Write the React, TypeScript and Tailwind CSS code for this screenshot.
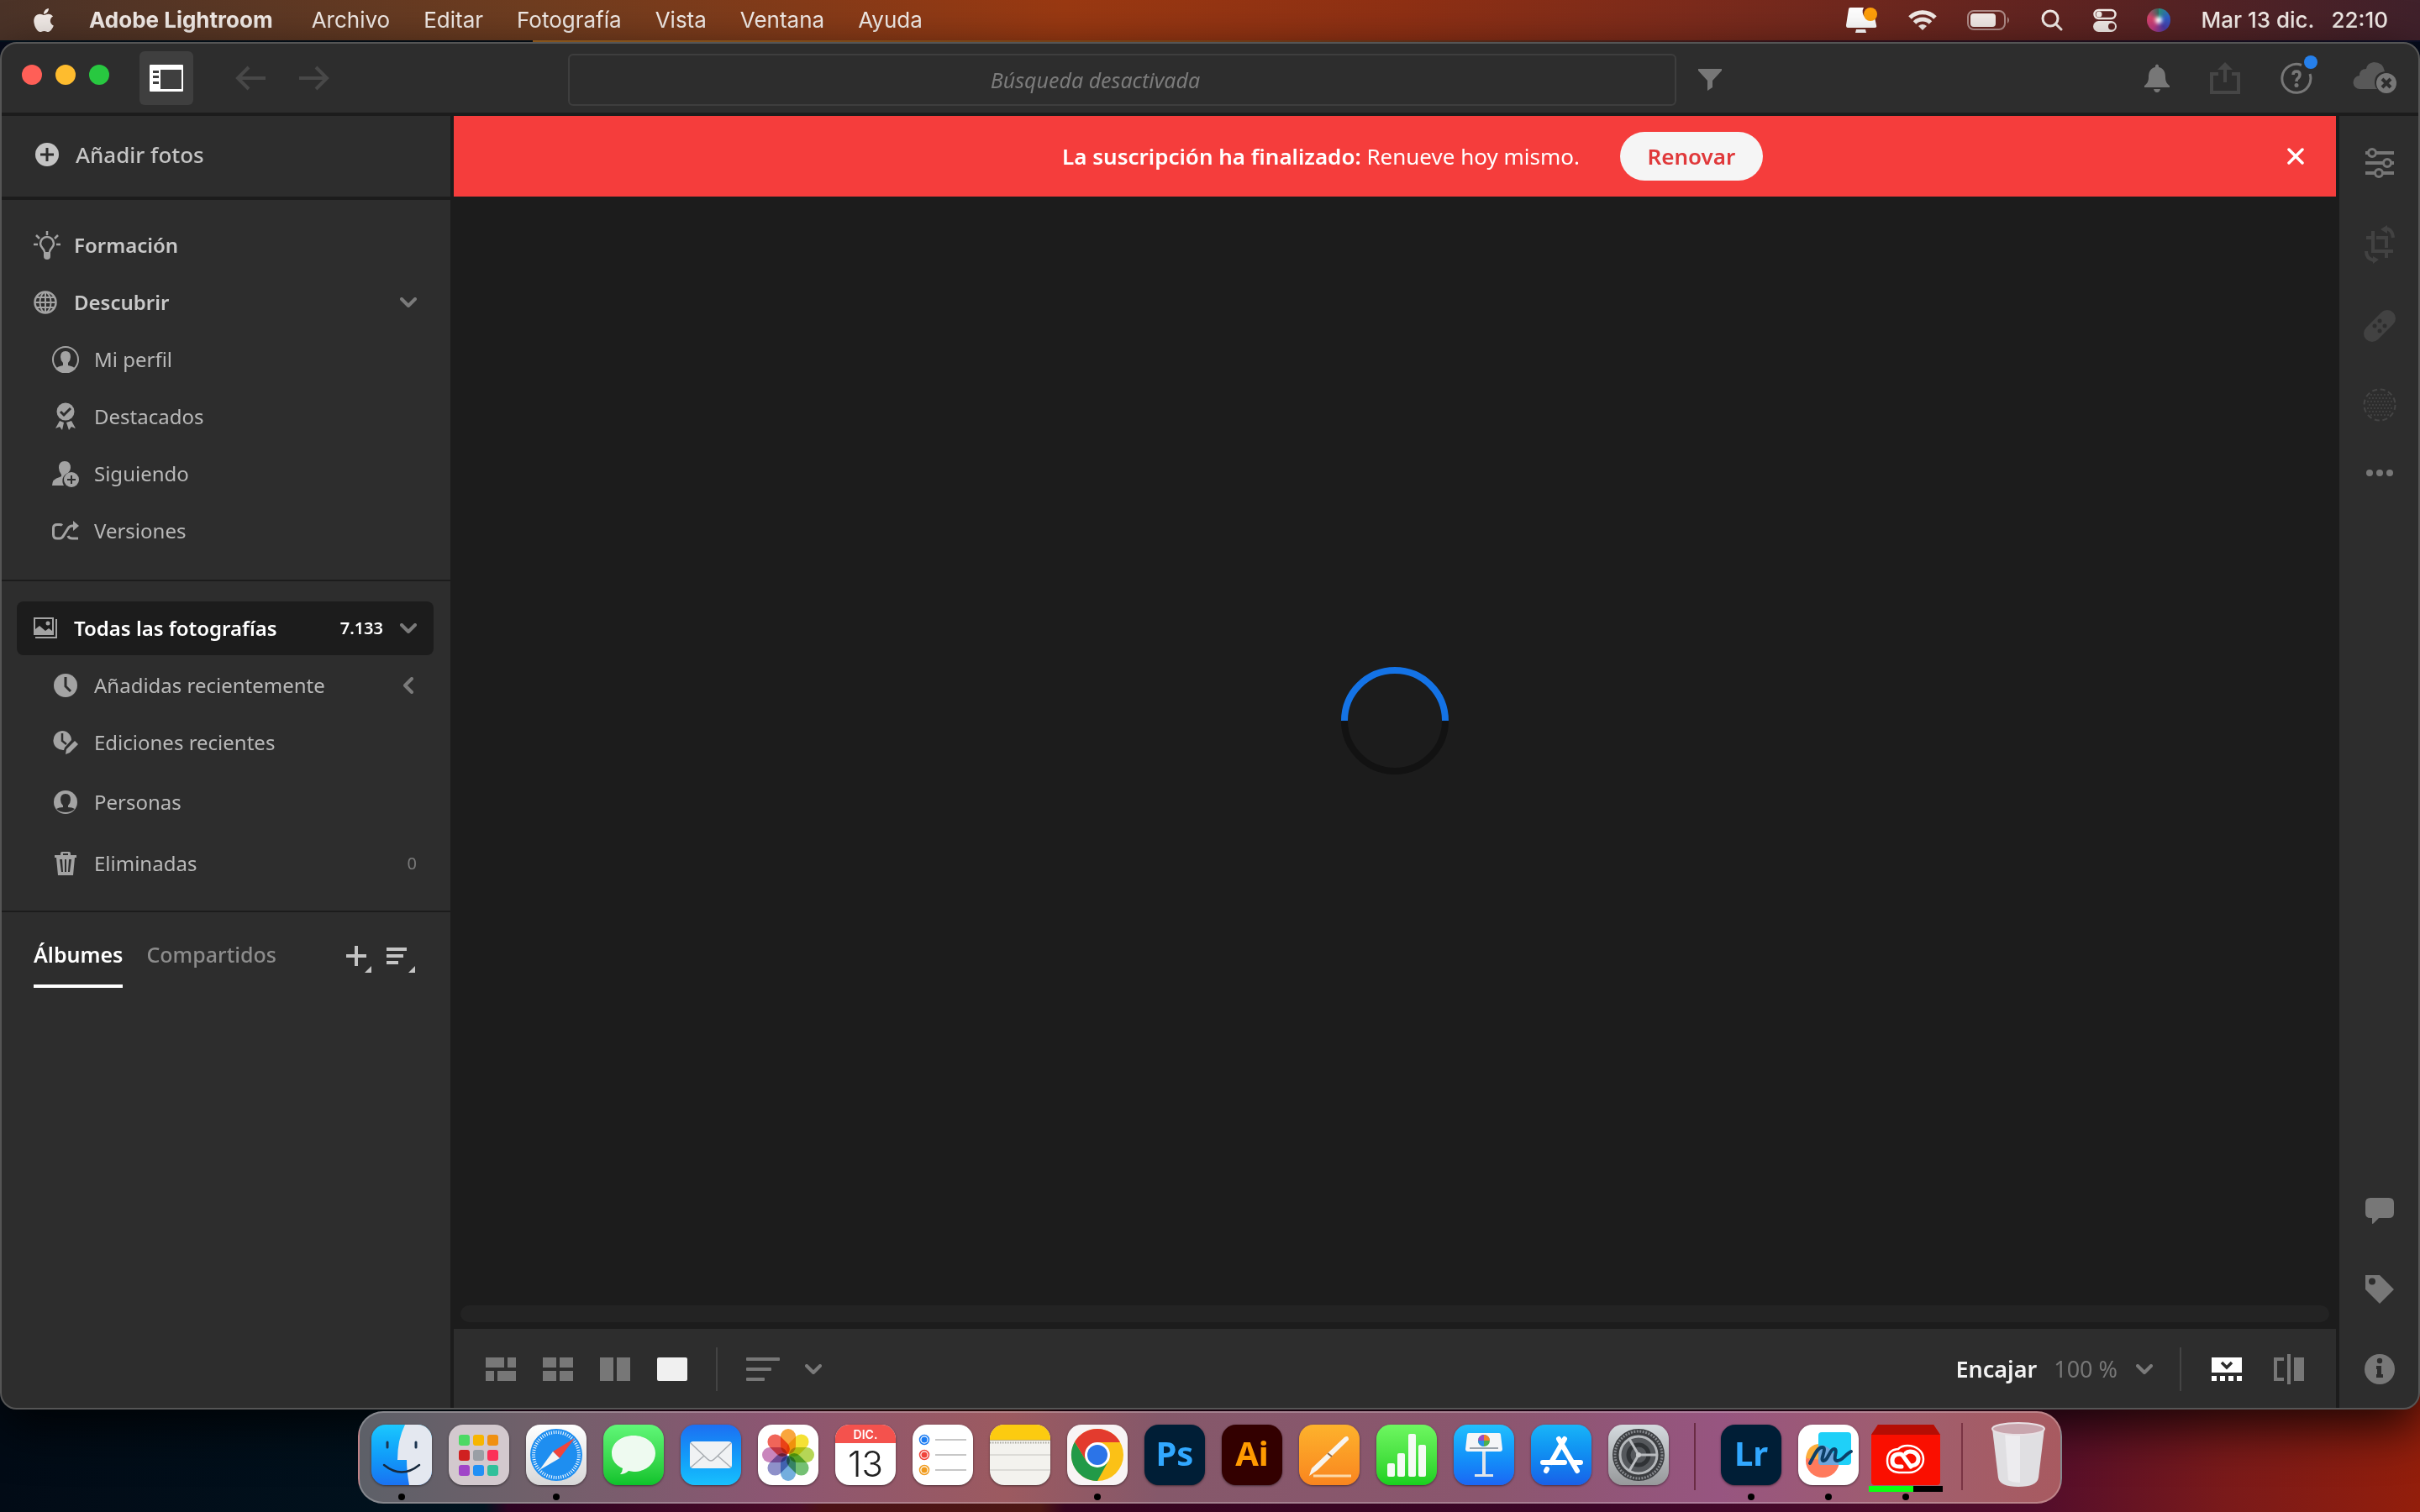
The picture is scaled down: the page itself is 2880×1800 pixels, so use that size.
import type { ReactNode } from 'react';
import { FaApple } from 'react-icons/fa';

type Kids = { children: ReactNode };

function Icon({ box, className, children }: Kids & { box: string; className: string }) {
  return (
    <svg viewBox={box} className={className} fill="currentColor" aria-hidden="true">
      {children}
    </svg>
  );
}

const Chevron = ({ className = 'w-5 h-3 text-[#7a7a7a]' }: { className?: string }) => (
  <svg viewBox="0 0 20 12" className={className} fill="none" stroke="currentColor" strokeWidth="4" strokeLinecap="round" strokeLinejoin="round" aria-hidden="true">
    <path d="M2 2l8 8 8-8" />
  </svg>
);

/* ---------- macOS menu bar ---------- */

const MENUS = ['Archivo', 'Editar', 'Fotografía', 'Vista', 'Ventana', 'Ayuda'];

function MenuBar() {
  return (
    <header className="flex h-12 shrink-0 items-center justify-between bg-linear-[90deg,#4b3328_0%,#6f3d20_22%,#9a3912_44%,#8f3014_58%,#7c2b1c_70%,#602421_85%,#40212b_100%] pr-[38px] pl-[38px] text-[26px] leading-8 text-[#f3ece8]">
      <nav className="flex items-center gap-10">
        <button aria-label="Apple">
          <FaApple className="h-8 w-7" />
        </button>
        <button className="mr-1.5 font-bold">Adobe Lightroom</button>
        {MENUS.map((m) => (
          <button key={m}>{m}</button>
        ))}
      </nav>
      <div className="flex items-center gap-9">
        <Icon box="0 0 38 32" className="h-8 w-[38px] text-white">
          <path d="M3 3q0-2 2-2h16a9 9 0 0 0 13 12l2 9q1 3-2 3H2q-2 0-2-3zM12 27h11l1 4H11z" />
          <circle cx="29" cy="9" r="8" fill="#ff9f0a" />
        </Icon>
        <svg viewBox="0 0 34 26" className="h-[26px] w-[34px]" fill="none" stroke="currentColor" strokeWidth="5" aria-hidden="true">
          <path d="M2 10a21 21 0 0 1 30 0M7.500 16a13.500 13.500 0 0 1 19 0" />
          <path d="M17 25l-5-5q5-4 10 0z" fill="currentColor" stroke="none" />
        </svg>
        <svg viewBox="0 0 52 26" className="h-[26px] w-[52px]" aria-hidden="true">
          <rect x="1" y="2" width="44" height="22" rx="7" fill="none" stroke="#b08c88" strokeWidth="2" />
          <rect x="4" y="5" width="30" height="16" rx="4" fill="currentColor" />
          <path d="M48 9q4 4 0 8z" fill="#b08c88" />
        </svg>
        <svg viewBox="0 0 26 26" className="size-[26px]" fill="none" stroke="currentColor" strokeWidth="3" strokeLinecap="round" aria-hidden="true">
          <circle cx="11" cy="11" r="9" />
          <path d="M17.500 17.500l6.500 6.500" />
        </svg>
        <svg viewBox="0 0 28 28" className="size-7" fill="currentColor" aria-hidden="true">
          <rect x="1.500" y="2" width="25" height="10" rx="5" fill="none" stroke="currentColor" strokeWidth="2.500" />
          <circle cx="7" cy="7" r="3.500" />
          <rect y="15" width="28" height="13" rx="6.500" />
          <circle cx="22" cy="21.500" r="4" fill="#5c2422" />
        </svg>
        <span className="flex size-7 items-center justify-center rounded-full bg-[conic-gradient(#2b8f7a,#2f5fc8,#4a3aa8,#c03a80,#d8436a,#356a60)]">
          <span className="size-2 rounded-full bg-white blur-[2px]" />
        </span>
        <time className="flex gap-5 font-medium">
          <span>Mar 13 dic.</span>
          <span>22:10</span>
        </time>
      </div>
    </header>
  );
}

/* ---------- Title bar ---------- */

function TitleBar() {
  return (
    <div className="flex h-[86px] shrink-0 items-center border-b-4 border-[#1c1c1c]">
      <div className="flex w-[674px] shrink-0 items-center pl-6">
        <div className="flex gap-4 pb-2">
          <button aria-label="Cerrar" className="size-6 rounded-full bg-[#ff5f57]" />
          <button aria-label="Minimizar" className="size-6 rounded-full bg-[#febc2e]" />
          <button aria-label="Ampliar" className="size-6 rounded-full bg-[#28c840]" />
        </div>
        <button aria-label="Panel izquierdo" className="ml-9 flex size-16 items-center justify-center rounded-md bg-[#3f3f3f]">
          <Icon box="0 0 40 32" className="h-8 w-10 text-white">
            <path fillRule="evenodd" d="M1 0h38q1 0 1 1v30q0 1-1 1H1q-1 0-1-1V1q0-1 1-1zm12 6v23h25V6z" />
            <path d="M4 7h7v3H4zm0 6h7v3H4zm0 7h7v3H4z" fill="#3f3f3f" />
          </Icon>
        </button>
        <div className="ml-[50px] flex gap-10 text-[#484848]">
          <button aria-label="Atrás">
            <svg viewBox="0 0 36 30" className="h-[30px] w-9" fill="none" stroke="currentColor" strokeWidth="4" aria-hidden="true">
              <path d="M36 15H3M16 2L3 15l13 13" />
            </svg>
          </button>
          <button aria-label="Adelante">
            <svg viewBox="0 0 36 30" className="h-[30px] w-9" fill="none" stroke="currentColor" strokeWidth="4" aria-hidden="true">
              <path d="M0 15h33M20 2l13 13-13 13" />
            </svg>
          </button>
        </div>
      </div>
      <input
        disabled
        aria-label="Buscar"
        placeholder="Búsqueda desactivada"
        className="mt-1 h-[62px] min-w-0 flex-1 rounded-md border-2 border-[#3e3e3e] pr-16 text-center font-['Noto_Sans',sans-serif] text-[25px] italic placeholder:text-[#7b7b7b]"
      />
      <div className="flex w-[883px] shrink-0 items-center justify-between pr-[26px] pl-[26px] text-[#777]">
        <button aria-label="Filtrar" className="pt-1">
          <Icon box="0 0 28 26" className="h-[26px] w-7">
            <path d="M0 0h28v2L17 14v8l-6 4V14L0 2z" />
          </Icon>
        </button>
        <div className="flex items-center gap-12">
          <button aria-label="Notificaciones">
            <Icon box="0 0 30 34" className="h-[34px] w-[30px]">
              <path d="M13 2q2-3 4 0v2c6 1 8 6 8 12 0 5 2 8 5 10v2H0v-2c3-2 5-5 5-10 0-6 2-11 8-12zM11 30h8q-1 4-4 4t-4-4z" />
            </Icon>
          </button>
          <button aria-label="Compartir" className="text-[#464646]">
            <svg viewBox="0 0 36 38" className="h-[38px] w-9" fill="none" stroke="currentColor" strokeWidth="4" aria-hidden="true">
              <path d="M10 14H2v22h32V14h-8M18 24V6" />
              <path d="M9 9l9-9 9 9z" fill="currentColor" stroke="none" />
            </svg>
          </button>
          <button aria-label="Ayuda" className="relative">
            <svg viewBox="0 0 38 38" className="size-[38px]" fill="none" stroke="currentColor" strokeWidth="3" aria-hidden="true">
              <path d="M25 3.500A17 17 0 1 0 35 14" />
              <path d="M15 15q0-4 4-4t4 4q0 2-2 4-2 1-2 4" strokeWidth="3.500" />
              <circle cx="19" cy="27.500" r="2.500" fill="currentColor" stroke="none" />
            </svg>
            <span className="absolute -top-2 -right-1.5 size-4 rounded-full bg-[#2680eb]" />
          </button>
          <button aria-label="Estado de la nube">
            <Icon box="0 0 52 38" className="h-[38px] w-[52px]">
              <path d="M9 32a8 8 0 0 1-1-16Q8 8 16 8q1-7 9-8 11 0 13 11-12 2-12 13 0 5 3 8z" fill="#585858" />
              <circle cx="40" cy="25" r="12" />
              <path d="M35 20l10 10m0-10L35 30" stroke="#2d2d2d" strokeWidth="4" />
            </Icon>
          </button>
        </div>
      </div>
    </div>
  );
}

/* ---------- Sidebar ---------- */

const icons = {
  bulb: (
    <svg viewBox="0 0 32 34" className="h-[34px] w-8" fill="none" stroke="currentColor" strokeWidth="2.500" aria-hidden="true">
      <path d="M16 0v5M0 16h5M27 16h5M3 5l4 4M29 5l-4 4M13 25c0-4-5-5-5-10a8 8 0 0 1 16 0c0 5-5 6-5 10" />
      <path d="M12 25h8v5q0 4-4 4t-4-4z" fill="currentColor" stroke="none" />
    </svg>
  ),
  globe: (
    <svg viewBox="0 0 28 28" className="size-7" fill="none" stroke="currentColor" strokeWidth="2" aria-hidden="true">
      <circle cx="14" cy="14" r="12.500" strokeWidth="2.500" />
      <path d="M14 2v24M2 14h24M4 8h20M4 20h20" />
      <ellipse cx="14" cy="14" rx="6.500" ry="12" />
    </svg>
  ),
  profile: (
    <Icon box="0 0 32 32" className="size-8">
      <circle cx="16" cy="16" r="15" fill="none" stroke="currentColor" strokeWidth="2" />
      <path d="M16 6q6 0 6 7 0 4-3 7v3q6 1 9 4a16 16 0 0 1-24 0q3-3 9-4v-3q-3-3-3-7 0-7 6-7z" />
    </Icon>
  ),
  award: (
    <Icon box="0 0 24 34" className="h-[34px] w-6">
      <circle cx="12" cy="11" r="10.500" />
      <path d="M6 11l4 4 8-8" fill="none" stroke="#2d2d2d" strokeWidth="3" />
      <path d="M5 22l5 2-2 9-3-4-5 2zM19 22l-6 2 3 9 3-4 5 2z" />
    </Icon>
  ),
  follow: (
    <Icon box="0 0 32 32" className="size-8">
      <path d="M15 1q7 0 7 8 0 3-3 6a10 10 0 0 0-5 15H0q0-8 9-10l2-1v-2q-3-4-3-8 0-8 7-8z" />
      <circle cx="23" cy="23" r="9" />
      <path d="M23 18v10M18 23h10" stroke="#2d2d2d" strokeWidth="2" />
    </Icon>
  ),
  versions: (
    <svg viewBox="0 0 32 24" className="h-6 w-8" fill="none" stroke="currentColor" strokeWidth="3" aria-hidden="true">
      <path d="M12 5.500q-1-1-3-1H6q-4.500 0-4.500 4v8q0 4.500 4.500 4.500h3q3 0 5-4l5-8q2-3 5-3h2M19 18q1 3 5 3h7" />
      <path d="M25 0l7 6-7 6z" fill="currentColor" stroke="none" />
    </svg>
  ),
  clock: (
    <Icon box="0 0 28 28" className="size-7">
      <circle cx="14" cy="14" r="14" />
      <path d="M14 4v11l6 6" fill="none" stroke="#2d2d2d" strokeWidth="3" />
    </Icon>
  ),
  edits: (
    <Icon box="0 0 30 30" className="size-[30px]">
      <path d="M11 1a11 11 0 0 1 11 11l-8 9-1 3A11 11 0 1 1 11 1z" />
      <path d="M11 4v9l5 4" fill="none" stroke="#2d2d2d" strokeWidth="2.500" />
      <path d="M15 29l1-6 10-10 4 4-10 10z" />
    </Icon>
  ),
  person: (
    <Icon box="0 0 28 28" className="size-7">
      <circle cx="14" cy="14" r="14" />
      <path d="M14 4q6 0 6 7 0 4-3 7v2q5 0 8 2-4 4-11 4T3 22q3-2 8-2v-2q-3-3-3-7 0-7 6-7z" fill="#2d2d2d" />
    </Icon>
  ),
  trash: (
    <Icon box="0 0 26 28" className="h-7 w-[26px]">
      <path fillRule="evenodd" d="M7 4V2q0-2 2-2h8q2 0 2 2v2h7v3h-2l-2 21H4L2 7H0V4zm3 0h6V2h-6zM6 9l2 15h2L9 9zm6 0v15h2V9zm5 0l-1 15h2l2-15z" />
    </Icon>
  ),
  photos: (
    <Icon box="0 0 28 26" className="h-[26px] w-7">
      <path fillRule="evenodd" d="M0 0h24v21H0zm2 2v12l5-4 7 6 4-3 4 3V2z" />
      <circle cx="17" cy="7" r="2.500" />
      <path d="M26 2h2v23H2v-2h24z" />
    </Icon>
  ),
};

function Row({ icon, label, right, sub, tall }: { icon: ReactNode; label: string; right?: ReactNode; sub?: boolean; tall?: boolean }) {
  return (
    <li>
      <button className={`flex w-full items-center pr-5 text-left ${tall ? 'h-[73px]' : 'h-[68px]'} ${sub ? 'pl-[42px] text-[#b9b9b9]' : 'pl-5 font-semibold text-[#c8c8c8]'}`}>
        <span className={`flex w-8 shrink-0 text-[#a3a3a3] ${sub ? 'justify-center' : ''}`}>{icon}</span>
        <span className={`flex-1 ${sub ? 'ml-[18px]' : 'ml-4'}`}>{label}</span>
        {right}
      </button>
    </li>
  );
}

function Sidebar() {
  return (
    <aside className="flex w-[538px] shrink-0 flex-col border-r-4 border-[#1c1c1c] font-['Noto_Sans',sans-serif] text-[24px]">
      <div className="flex h-[100px] items-center border-b-4 border-[#1c1c1c] pb-1 pl-10">
        <button className="flex items-center gap-5 text-[26px] font-medium text-[#c4c4c4]">
          <Icon box="0 0 28 28" className="size-7">
            <circle cx="14" cy="14" r="14" />
            <path d="M14 6v16M6 14h16" stroke="#2d2d2d" strokeWidth="3" />
          </Icon>
          Añadir fotos
        </button>
      </div>

      <ul className="border-b-2 border-[#1c1c1c] pt-5 pr-5 pb-6 pl-[18px]">
        <Row icon={icons.bulb} label="Formación" />
        <Row icon={icons.globe} label="Descubrir" right={<Chevron />} />
        <Row sub icon={icons.profile} label="Mi perfil" />
        <Row sub icon={icons.award} label="Destacados" />
        <Row sub icon={icons.follow} label="Siguiendo" />
        <Row sub icon={icons.versions} label="Versiones" />
      </ul>

      <ul className="border-b-2 border-[#1c1c1c] pt-6 pr-5 pb-5 pl-[18px]">
        <li className="mb-0.5">
          <button className="flex h-16 w-full items-center rounded-lg bg-[#1c1c1c] px-5 text-left font-semibold text-white">
            <span className="w-8 text-[#a3a3a3]">{icons.photos}</span>
            <span className="ml-4 flex-1">Todas las fotografías</span>
            <span className="mr-5 text-[20px]">7.133</span>
            <Chevron />
          </button>
        </li>
        <Row sub icon={icons.clock} label="Añadidas recientemente" right={<Chevron className="h-3 w-5 rotate-90 text-[#7a7a7a]" />} />
        <Row sub icon={icons.edits} label="Ediciones recientes" />
        <Row sub tall icon={icons.person} label="Personas" />
        <Row sub tall icon={icons.trash} label="Eliminadas" right={<span className="text-[20px] text-[#7a7a7a]">0</span>} />
      </ul>

      <div className="flex h-[90px] items-end justify-between pr-10 pl-[38px]">
        <div className="flex gap-7 text-[25px] font-semibold">
          <button className="h-[74px] border-b-4 border-white text-white">Álbumes</button>
          <button className="h-[74px] border-b-4 border-transparent font-medium text-[#8c8c8c]">Compartidos</button>
        </div>
        <div className="flex gap-4 pb-[18px] text-[#c4c4c4]">
          <button aria-label="Nuevo álbum">
            <Icon box="0 0 32 32" className="size-8">
              <path d="M10 0h4v10h10v4H14v10h-4V14H0v-4h10zM30 24v8h-8z" />
            </Icon>
          </button>
          <button aria-label="Ordenar">
            <Icon box="0 0 36 32" className="h-8 w-9">
              <path d="M0 2h24v4H0zm0 8h20v4H0zm0 8h14v4H0zM34 24v8h-8z" />
            </Icon>
          </button>
        </div>
      </div>
    </aside>
  );
}

/* ---------- Centre ---------- */

function Banner() {
  return (
    <div className="flex h-24 shrink-0 items-center bg-[#f53d3c] font-['Noto_Sans',sans-serif] text-[26px] text-white">
      <div className="flex-1" />
      <div className="flex items-center gap-12 pl-20">
        <p>
          <strong className="font-semibold">La suscripción ha finalizado:</strong> Renueve hoy mismo.
        </p>
        <button className="h-[58px] w-[170px] rounded-full bg-[#f5f5f5] font-semibold text-[#e0393b]">Renovar</button>
      </div>
      <div className="flex flex-1 justify-end pr-[38px]">
        <button aria-label="Cerrar aviso">
          <svg viewBox="0 0 20 20" className="size-5" stroke="currentColor" strokeWidth="3.500" strokeLinecap="round" aria-hidden="true">
            <path d="M2 2l16 16M18 2L2 18" />
          </svg>
        </button>
      </div>
    </div>
  );
}

function BottomBar() {
  return (
    <div className="flex h-[94px] shrink-0 items-center justify-between bg-[#2d2d2d] pt-0.5 pr-[38px] pl-[38px] text-[#777]">
      <div className="flex items-center">
        <div className="flex gap-8">
          <button aria-label="Cuadrícula de fotos">
            <Icon box="0 0 36 28" className="h-7 w-9">
              <path d="M0 0h22v12H0zM26 0h10v12H26zM0 16h10v12H0zM14 16h22v12H14z" />
            </Icon>
          </button>
          <button aria-label="Cuadrícula cuadrada">
            <Icon box="0 0 36 28" className="h-7 w-9">
              <path d="M0 0h16v12H0zM20 0h16v12H20zM0 16h16v12H0zM20 16h16v12H20z" />
            </Icon>
          </button>
          <button aria-label="Comparar">
            <Icon box="0 0 36 28" className="h-7 w-9">
              <path d="M0 0h16v28H0zM20 0h16v28H20z" />
            </Icon>
          </button>
          <button aria-label="Detalle" className="h-7 w-9 rounded-xs bg-[#f0f0f0]" />
        </div>
        <div className="mx-[34px] h-[52px] w-0.5 bg-[#444]" />
        <button aria-label="Ordenar" className="flex items-center gap-[30px]">
          <Icon box="0 0 40 28" className="h-7 w-10">
            <rect width="40" height="4" rx="1" />
            <rect y="12" width="30" height="4" rx="1" />
            <rect y="24" width="22" height="4" rx="1" />
          </Icon>
          <Chevron />
        </button>
      </div>
      <div className="flex items-center font-['Noto_Sans',sans-serif] text-[27px]">
        <button className="font-semibold text-[#f2f2f2]">Encajar</button>
        <button className="ml-5 flex items-center gap-[22px]">
          100 %
          <Chevron />
        </button>
        <div className="mr-9 ml-8 h-[52px] w-0.5 bg-[#444]" />
        <div className="flex items-center gap-[38px]">
          <button aria-label="Tira de imágenes">
            <Icon box="0 0 36 28" className="h-7 w-9 text-white">
              <path d="M0 0h36v18H0zM0 22h6v6H0zM10 22h6v6h-6zM20 22h6v6h-6zM30 22h6v6h-6z" />
              <path d="M12 6l6 6 6-6" fill="none" stroke="#2d2d2d" strokeWidth="3.500" />
            </Icon>
          </button>
          <button aria-label="Ver original">
            <Icon box="0 0 36 36" className="size-9">
              <path d="M0 4h12v4H4v20h8v4H0zM16 0h4v36h-4zM24 4h12v28H24z" />
            </Icon>
          </button>
        </div>
      </div>
    </div>
  );
}

function Main() {
  return (
    <main className="flex min-w-0 flex-1 flex-col bg-[#1c1c1c]">
      <Banner />
      <div className="flex flex-1 items-center justify-center pb-[72px]">
        <svg viewBox="0 0 128 128" className="size-32" fill="none" strokeWidth="8" role="img" aria-label="Cargando">
          <circle cx="64" cy="64" r="60" stroke="#121212" />
          <path d="M4 64a60 60 0 0 1 120 0" stroke="#1473e6" />
        </svg>
      </div>
      <div className="mx-2 mb-2 h-5 shrink-0 rounded-full bg-[#232323]" />
      <BottomBar />
    </main>
  );
}

/* ---------- Right rail ---------- */

const DOTS = Array.from({ length: 9 }, (_, r) => Array.from({ length: 9 }, (_, c) => ({ x: 4 + c * 4 - (r % 2) * 2, y: 4 + r * 4 })))
  .flat()
  .filter((d) => Math.hypot(d.x - 20, d.y - 20) < 16);

function Rail() {
  return (
    <aside className="flex w-[98px] shrink-0 flex-col items-center justify-between border-l-4 border-[#1c1c1c] pt-9 pb-7 pl-0.5 text-[#777]">
      <div className="flex flex-col items-center gap-[54px]">
        <button aria-label="Editar" className="py-0.5">
          <svg viewBox="0 0 36 36" className="size-9" stroke="currentColor" strokeWidth="4" fill="#2d2d2d" aria-hidden="true">
            <path d="M1 6h34M1 18h34M1 30h34" />
            <g strokeWidth="3">
              <circle cx="9" cy="6" r="4.500" />
              <circle cx="27" cy="18" r="4.500" />
              <circle cx="17" cy="30" r="4.500" />
            </g>
          </svg>
        </button>
        <button aria-label="Recortar" className="text-[#424242]">
          <svg viewBox="0 0 36 46" className="h-[46px] w-9" fill="none" stroke="currentColor" strokeWidth="4" aria-hidden="true">
            <path d="M10 7v24h24M2 15h6M14 15h12v12M26 33v6M24 4q9 0 10 11M2 31q0 9 9 11" />
            <path d="M27 0v10l-8-5zM10 37v9l7-5z" fill="currentColor" stroke="none" />
          </svg>
        </button>
        <button aria-label="Corregir" className="text-[#424242]">
          <Icon box="0 0 40 40" className="size-10">
            <path d="M11 29L29 11" stroke="currentColor" strokeWidth="20" strokeLinecap="round" />
            <g fill="#2d2d2d">
              <circle cx="20" cy="14" r="2.500" />
              <circle cx="26" cy="20" r="2.500" />
              <circle cx="14" cy="20" r="2.500" />
              <circle cx="20" cy="26" r="2.500" />
            </g>
          </Icon>
        </button>
        <button aria-label="Máscaras" className="text-[#454545]">
          <Icon box="0 0 40 40" className="size-10">
            <circle cx="20" cy="20" r="18.500" fill="none" stroke="currentColor" strokeWidth="2" strokeDasharray="6 3.700" />
            {DOTS.map((d, i) => (
              <circle key={i} cx={d.x} cy={d.y} r="1" />
            ))}
          </Icon>
        </button>
        <button aria-label="Más">
          <Icon box="0 0 32 14" className="h-3.5 w-8">
            <circle cx="4" cy="7" r="4" />
            <circle cx="16" cy="7" r="4" />
            <circle cx="28" cy="7" r="4" />
          </Icon>
        </button>
      </div>
      <div className="flex flex-col items-center gap-[60px]">
        <button aria-label="Comentarios">
          <Icon box="0 0 34 32" className="h-8 w-[34px]">
            <path d="M6 0h22q6 0 6 6v12q0 6-6 6H16l-6 6q-2 2-2 0v-6H6q-6 0-6-6V6q0-6 6-6z" />
          </Icon>
        </button>
        <button aria-label="Palabras clave">
          <Icon box="0 0 34 34" className="size-[34px]">
            <path fillRule="evenodd" d="M0 0h17l17 17-17 17L0 17zm8 3.500a4 4 0 1 0 0 8 4 4 0 0 0 0-8z" />
          </Icon>
        </button>
        <button aria-label="Información">
          <Icon box="0 0 36 36" className="size-9">
            <circle cx="18" cy="18" r="18" />
            <path d="M14 14h6v10h2v4h-8v-4h1v-6h-1z" fill="#2d2d2d" />
            <circle cx="18" cy="8" r="3.200" fill="#2d2d2d" />
          </Icon>
        </button>
      </div>
    </aside>
  );
}

/* ---------- Dock ---------- */

function Tile({ name, running, className = '', children }: Kids & { name: string; running?: boolean; className?: string }) {
  return (
    <button aria-label={name} className="flex flex-col items-center gap-[10px]">
      <span className={`flex size-[72px] items-center justify-center overflow-hidden rounded-[17px] shadow-sm shadow-black/40 ${className}`}>{children}</span>
      <span className={`size-2 rounded-full ${running ? 'bg-black' : ''}`} />
    </button>
  );
}

function Art({ children }: Kids) {
  return (
    <svg viewBox="0 0 72 72" className="size-[72px]" aria-hidden="true">
      {children}
    </svg>
  );
}

const LAUNCH = ['#4cd964', '#f7b500', '#f09010', '#d02020', '#9a9fa5', '#fc3158', '#a045c8', '#2290f5', '#30c09a'];
const PETALS = ['#f8961c', '#f4dc10', '#a8cf38', '#5bb55a', '#5aa0d8', '#7a7cc0', '#c070b0', '#ee4a3c'];
const TICKS = Array.from({ length: 60 }, (_, i) => i * 6);

function Dock() {
  return (
    <footer className="mx-auto mt-0.5 mb-2.5 flex h-[110px] shrink-0 gap-5 rounded-[30px] border-2 border-white/25 bg-linear-[90deg,#5d6068_0%,#70606a_10%,#8c5672_24%,#9c5a60_38%,#85586a_47%,#8b566e_66%,#975580_80%,#a15e6c_92%,#a85a60_100%] px-3.5 pt-3.5">
      <Tile name="Finder" running className="bg-linear-to-b from-[#1cc8fe] to-[#1a72f2]">
        <Art>
          <path d="M40 0h32v72H45q-3-16-3-30H31Q31 18 40 0z" fill="#e4e8f0" />
          <path d="M19 21v6M53 21v6" stroke="#1c3550" strokeWidth="3" strokeLinecap="round" />
          <path d="M15 48q21 17 42 0" fill="none" stroke="#16283c" strokeWidth="2.500" strokeLinecap="round" />
        </Art>
      </Tile>
      <Tile name="Launchpad" className="bg-[#d3c9ce]">
        <Art>
          {LAUNCH.map((c, i) => (
            <rect key={c} x={12 + (i % 3) * 17} y={12 + Math.floor(i / 3) * 18} width="13" height="13" rx="3" fill={c} />
          ))}
        </Art>
      </Tile>
      <Tile name="Safari" running className="bg-linear-to-b from-white to-[#d8d8d8]">
        <Art>
          <circle cx="36" cy="36" r="31" fill="#1e8ef0" />
          {TICKS.map((a) => (
            <path key={a} d="M36 7v4" stroke="#fff" strokeWidth="1" transform={`rotate(${a} 36 36)`} />
          ))}
          <path d="M58 16L32 32l8 8z" fill="#f0443c" />
          <path d="M16 54l16-22 8 8z" fill="#f4f4f4" />
        </Art>
      </Tile>
      <Tile name="Mensajes" className="bg-linear-to-b from-[#5ff777] to-[#0bc32a]">
        <Art>
          <path d="M36 13c15 0 26 9 26 21S51 56 36 56l-6-1q-4 4-10 4 3-3 3-7Q10 46 10 34c0-12 11-21 26-21z" fill="#eefaf0" />
        </Art>
      </Tile>
      <Tile name="Mail" className="bg-linear-to-b from-[#1d6ff2] to-[#19c0fd]">
        <Art>
          <rect x="11" y="20" width="50" height="32" rx="4" fill="#f0f2f4" />
          <path d="M12 22l20 19q4 4 8 0l20-19M12 51l16-14M60 51L44 37" fill="none" stroke="#a8adb2" strokeWidth="1.500" />
        </Art>
      </Tile>
      <Tile name="Fotos" className="bg-white">
        <Art>
          {PETALS.map((c, i) => (
            <rect key={c} x="27" y="5" width="18" height="30" rx="9" fill={c} opacity="0.85" transform={`rotate(${i * 45} 36 36)`} className="mix-blend-multiply" />
          ))}
        </Art>
      </Tile>
      <Tile name="Calendario" className="flex-col bg-white">
        <span className="flex h-[22px] w-full items-center justify-center bg-[#f4524d] text-[14px] font-semibold text-white">DIC.</span>
        <span className="flex flex-1 items-center text-[42px] leading-none font-light text-[#222]">13</span>
      </Tile>
      <Tile name="Recordatorios" className="bg-white">
        <Art>
          {['#1b7cf2', '#f0443c', '#f09a1c'].map((c, i) => (
            <g key={c}>
              <circle cx="14" cy={18 + i * 18} r="5.500" fill="#fff" stroke={c} strokeWidth="1.500" />
              <circle cx="14" cy={18 + i * 18} r="3.500" fill={c} />
              <path d={`M27 ${18 + i * 18}h37`} stroke="#b5b5b5" strokeWidth="1.500" />
            </g>
          ))}
        </Art>
      </Tile>
      <Tile name="Notas" className="bg-[#f3f2ee]">
        <Art>
          <rect width="72" height="18" fill="#fccb10" />
          <path d="M0 18.500h72" stroke="#b9a97c" />
          <path d="M0 21.500h72" stroke="#a8a8a0" strokeWidth="2" strokeDasharray="1.500 1.500" />
          <path d="M0 36h72M0 54h72" stroke="#d5d4d0" strokeWidth="1.500" />
        </Art>
      </Tile>
      <Tile name="Chrome" running className="bg-[#f8f4f5]">
        <Art>
          <circle cx="36" cy="36" r="31" fill="#fbc116" />
          <path d="M9 20.500A31 31 0 0 0 36 67l13-23.500-26 0z" fill="#229a48" />
          <path d="M36 21h27a31 31 0 0 0-54-.5l14 23z" fill="#e33b2e" />
          <circle cx="36" cy="36" r="15" fill="#fff" />
          <circle cx="36" cy="36" r="12" fill="#2b74e8" />
        </Art>
      </Tile>
      <Tile name="Photoshop" className="bg-[#001e36] pb-1 font-['Noto_Sans',sans-serif] text-[40px] font-bold text-[#31a8ff]">Ps</Tile>
      <Tile name="Illustrator" className="bg-[#330000] pb-1 font-['Noto_Sans',sans-serif] text-[40px] font-bold text-[#ff9a00]">Ai</Tile>
      <Tile name="Pages" className="bg-linear-to-b from-[#fdb22c] to-[#f9851f]">
        <Art>
          <path d="M12 61l3-9L54 15q5-3 5 3L22 54z" fill="#f8f4ee" />
          <path d="M34 34l5 4" stroke="#8a6a4a" strokeWidth="2" />
          <path d="M17 61h45" stroke="#fcd9a8" strokeWidth="3" />
        </Art>
      </Tile>
      <Tile name="Numbers" className="bg-linear-to-b from-[#6df760] to-[#17d01e]">
        <Art>
          <g fill="#f4fbf4">
            <rect x="13" y="46" width="9" height="16" rx="2" />
            <rect x="25" y="34" width="9" height="28" rx="2" />
            <rect x="38" y="11" width="9" height="51" rx="2" />
            <rect x="50" y="24" width="9" height="38" rx="2" />
          </g>
        </Art>
      </Tile>
      <Tile name="Keynote" className="bg-linear-to-b from-[#22c0fd] to-[#1c66f4]">
        <Art>
          <path d="M18 10h36q2 0 2 2l2 17q0 3-3 3H17q-3 0-3-3l2-17q0-2 2-2z" fill="#f4f6f8" />
          <path d="M19 28h34" stroke="#9aa3ac" strokeWidth="2" />
          <path d="M34 32h4v27h9v3H25v-3h9z" fill="#dfe5ea" />
          <circle cx="36" cy="19" r="7" fill="#4cb050" />
          <path d="M36 19v-7a7 7 0 0 0-7 7z" fill="#a04ac0" />
          <path d="M36 19v-7a7 7 0 0 1 7 7z" fill="#f0802c" />
          <path d="M36 19h-7a7 7 0 0 0 7 7z" fill="#2a90e8" />
        </Art>
      </Tile>
      <Tile name="App Store" className="bg-linear-to-b from-[#1ab5f8] to-[#1a60e8]">
        <Art>
          <g stroke="#fff" strokeWidth="6" strokeLinecap="round" fill="none">
            <path d="M40 17L24 45M33 17l22 38M14 45h26M51 45h8M19 53l-1 2" />
          </g>
        </Art>
      </Tile>
      <Tile name="Ajustes" className="bg-linear-to-b from-[#d4dade] to-[#97999b]">
        <Art>
          <circle cx="36" cy="36" r="31" fill="#3b3d40" />
          <circle cx="36" cy="36" r="28" fill="none" stroke="#85888c" strokeWidth="3" strokeDasharray="2 1.500" />
          <circle cx="36" cy="36" r="22" fill="#55585c" stroke="#b5b8bb" strokeWidth="3" />
          <circle cx="36" cy="36" r="12" fill="none" stroke="#303336" strokeWidth="5" />
          <path d="M36 36h22M36 36L25 17M36 36L25 55" stroke="#b9bcbf" strokeWidth="3" />
          <circle cx="36" cy="36" r="3" fill="#c8cacc" />
        </Art>
      </Tile>
      <span className="-mt-0.5 flex h-20 w-[22px] justify-center">
        <span className="w-0.5 bg-[#6a2c44]" />
      </span>
      <Tile name="Lightroom" running className="bg-[#001e36] pb-1 font-['Noto_Sans',sans-serif] text-[40px] font-bold text-[#31a8ff]">Lr</Tile>
      <Tile name="Freeform" running className="bg-white">
        <Art>
          <circle cx="29" cy="43" r="20" fill="#ff7a5c" />
          <path d="M9 40q2-17 17-17l12 20z" fill="#fbae3c" />
          <rect x="24" y="9" width="39" height="39" rx="4" fill="#1fd0f8" />
          <path d="M24 25q14-4 25 23H28q-4 0-4-4z" fill="#6fa6dc" />
          <path d="M14 46c5-9 9-20 15-19s-4 15 1 16 8-15 13-14-3 13 3 14 10-8 17-11" fill="none" stroke="#0d4068" strokeWidth="4" strokeLinecap="round" />
        </Art>
      </Tile>
      <button aria-label="Creative Cloud" className="relative flex flex-col items-center gap-[10px]">
        <svg viewBox="0 0 72 72" className="size-[72px] overflow-visible" aria-hidden="true">
          <path d="M3 0h66l8 12v56q0 4-4 4H-1q-4 0-4-4V12z" fill="#fa0f00" />
          <path d="M3 0h66l8 12H-5z" fill="#b50d04" />
          <g fill="none" stroke="#fff" strokeLinecap="round">
            <path d="M28 57q-14-1-14-14t13-14q4-4 11-4c11 0 19 7 19 16s-8 16-17 16z" strokeWidth="2.500" />
            <path d="M43 49q8-1 8-8c0-5-4-9-10-9q-3 0-5 2" strokeWidth="5" />
            <path d="M31 50q-11 1-11-7t9-8q3 0 5 4l8 11" strokeWidth="5" />
          </g>
        </svg>
        <span className="size-2 rounded-full bg-black" />
        <span className="absolute top-[73px] -left-2 flex h-[7px] w-[88px] bg-black">
          <span className="w-3/5 bg-[#0bff10]" />
        </span>
      </button>
      <span className="-mt-0.5 flex h-20 w-[22px] justify-center">
        <span className="w-0.5 bg-[#7a3444]" />
      </span>
      <button aria-label="Papelera" className="flex flex-col">
        <svg viewBox="0 0 72 80" className="-mt-1 h-20 w-[72px]" aria-hidden="true">
          <path d="M5 9l7 58q2 11 24 11t24-11l7-58z" fill="#e0dfe2" />
          <path d="M20 14l4 56q5 3 14 3V14z" fill="#edecef" />
          <ellipse cx="36" cy="9" rx="31" ry="7" fill="#c9a6ae" stroke="#e8e0e4" strokeWidth="2" />
        </svg>
      </button>
    </footer>
  );
}

export default function App() {
  return (
    <div className="flex h-screen flex-col overflow-hidden bg-[linear-gradient(180deg,#060c1c_0,#060c1c_80px,transparent_160px),linear-gradient(90deg,#020b16_0%,#01131f_20%,#2e0322_21%,#4a0b28_33%,#4c1216_34%,#4d1714_43%,#36041f_44%,#3c0628_66%,#520d2c_84%,#7a1a1a_92%,#931e0b_100%)] font-[Inter,sans-serif]">
      <MenuBar />
      <div className="h-0.5 shrink-0 bg-linear-[90deg,#03131f_0%,#04101a_22%,#a86a24_22%,#8a4a1c_50%,#3a1420_75%,#0c1028_100%]" />
      <div className="flex min-h-0 flex-1 flex-col overflow-hidden rounded-[20px] border-2 border-[#555] bg-[#2d2d2d] shadow-[0_20px_60px_rgba(0,0,0,0.8)]">
        <TitleBar />
        <div className="flex min-h-0 flex-1">
          <Sidebar />
          <Main />
          <Rail />
        </div>
      </div>
      <Dock />
    </div>
  );
}
